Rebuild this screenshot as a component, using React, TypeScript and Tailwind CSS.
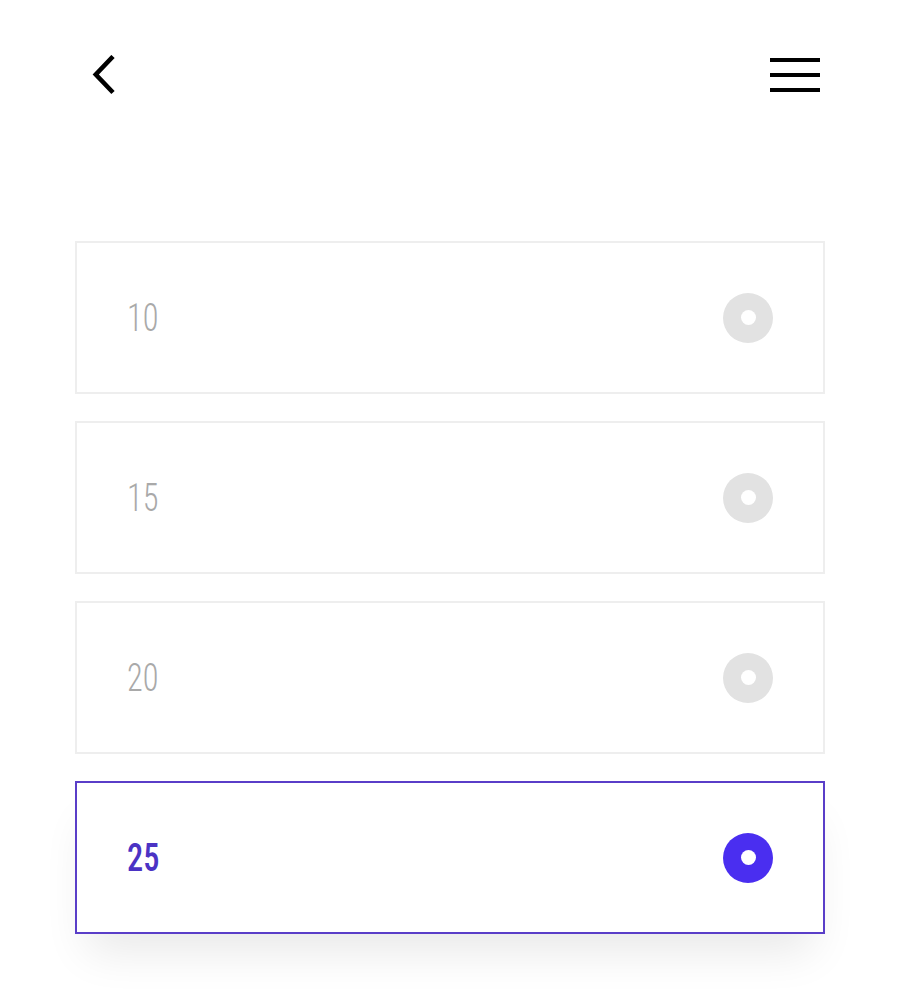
import React, { useState } from "react";

const options = [10, 15, 20, 25];

function Radio({ active }: { active: boolean }) {
  return (
    <div
      className={
        "w-[50px] h-[50px] rounded-full flex items-center justify-center " +
        (active ? "bg-[#4a2ef0]" : "bg-[#e2e2e2]")
      }
    >
      <div className="w-[15px] h-[15px] rounded-full bg-white" />
    </div>
  );
}

export default function App() {
  const [selected, setSelected] = useState(25);

  return (
    <div className="min-h-[991px] w-full bg-white" style={{ fontFamily: '"Roboto Condensed", Roboto, sans-serif' }}>
      {/* Top bar */}
      <div className="flex items-start justify-between pl-[92px] pr-[80px] pt-[55px]">
        <button className="w-[24px] h-[40px]">
          <svg width="24" height="40" viewBox="0 0 24 40" fill="none">
            <polyline points="21,1.5 3.8,19.5 21,37.5" stroke="#000" strokeWidth="4.6" />
          </svg>
        </button>
        <button className="flex flex-col gap-[11px] pt-[3px] w-[50px]">
          <span className="block h-[4px] w-full bg-black" />
          <span className="block h-[4px] w-full bg-black" />
          <span className="block h-[4px] w-full bg-black" />
        </button>
      </div>

      {/* Options */}
      <div className="flex flex-col gap-[27px] px-[75px] pt-[146px]">
        {options.map((n) => {
          const active = n === selected;
          return (
            <div
              key={n}
              onClick={() => setSelected(n)}
              className={
                "h-[153px] border-2 flex items-center justify-between pl-[50px] pr-[50px] bg-white cursor-pointer " +
                (active
                  ? "border-[#5a3ec8] shadow-[0_30px_45px_-12px_rgba(0,0,0,0.09)]"
                  : "border-[#eeeeee]")
              }
            >
              <span
                className={
                  "text-[38px] leading-none origin-left scale-x-[0.85] " +
                  (active ? "text-[#4b33c4] font-medium" : "text-[#a9a9a9] font-light")
                }
              >
                {n}
              </span>
              <Radio active={active} />
            </div>
          );
        })}
      </div>
    </div>
  );
}
